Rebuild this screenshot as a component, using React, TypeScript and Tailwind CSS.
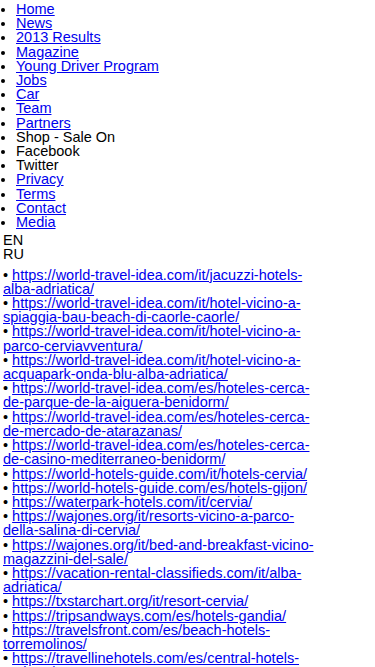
import React from "react";

const nav: { label: string; link: boolean }[] = [
  { label: "Home", link: true },
  { label: "News", link: true },
  { label: "2013 Results", link: true },
  { label: "Magazine", link: true },
  { label: "Young Driver Program", link: true },
  { label: "Jobs", link: true },
  { label: "Car", link: true },
  { label: "Team", link: true },
  { label: "Partners", link: true },
  { label: "Shop - Sale On", link: false },
  { label: "Facebook", link: false },
  { label: "Twitter", link: false },
  { label: "Privacy", link: true },
  { label: "Terms", link: true },
  { label: "Contact", link: true },
  { label: "Media", link: true },
];

const links = [
  "https://world-travel-idea.com/it/jacuzzi-hotels-alba-adriatica/",
  "https://world-travel-idea.com/it/hotel-vicino-a-spiaggia-bau-beach-di-caorle-caorle/",
  "https://world-travel-idea.com/it/hotel-vicino-a-parco-cerviavventura/",
  "https://world-travel-idea.com/it/hotel-vicino-a-acquapark-onda-blu-alba-adriatica/",
  "https://world-travel-idea.com/es/hoteles-cerca-de-parque-de-la-aiguera-benidorm/",
  "https://world-travel-idea.com/es/hoteles-cerca-de-mercado-de-atarazanas/",
  "https://world-travel-idea.com/es/hoteles-cerca-de-casino-mediterraneo-benidorm/",
  "https://world-hotels-guide.com/it/hotels-cervia/",
  "https://world-hotels-guide.com/es/hotels-gijon/",
  "https://waterpark-hotels.com/it/cervia/",
  "https://wajones.org/it/resorts-vicino-a-parco-della-salina-di-cervia/",
  "https://wajones.org/it/bed-and-breakfast-vicino-magazzini-del-sale/",
  "https://vacation-rental-classifieds.com/it/alba-adriatica/",
  "https://txstarchart.org/it/resort-cervia/",
  "https://tripsandways.com/es/hotels-gandia/",
  "https://travelsfront.com/es/beach-hotels-torremolinos/",
  "https://travellinehotels.com/es/central-hotels-malaga/",
];

export default function App() {
  return (
    <div
      className="bg-white text-black text-[14.5px] leading-[14.2px] min-h-[667px] overflow-hidden"
      style={{ fontFamily: '"Liberation Sans", Arial, sans-serif' }}
    >
      <ul className="list-disc pl-[16px] pt-[2px] mb-[4px]">
        {nav.map((n) => (
          <li key={n.label}>
            {n.link ? (
              <a href="#" className="text-[#0000ee] underline">
                {n.label}
              </a>
            ) : (
              n.label
            )}
          </li>
        ))}
      </ul>
      <div className="pl-[3px]">EN</div>
      <div className="pl-[3px]">RU</div>
      <div className="pl-[3px] pt-[6px] w-[322px]">
        {links.map((l) => (
          <div key={l}>
            •{" "}
            <a href="#" className="text-[#0000ee] underline">
              {l}
            </a>
          </div>
        ))}
      </div>
    </div>
  );
}
